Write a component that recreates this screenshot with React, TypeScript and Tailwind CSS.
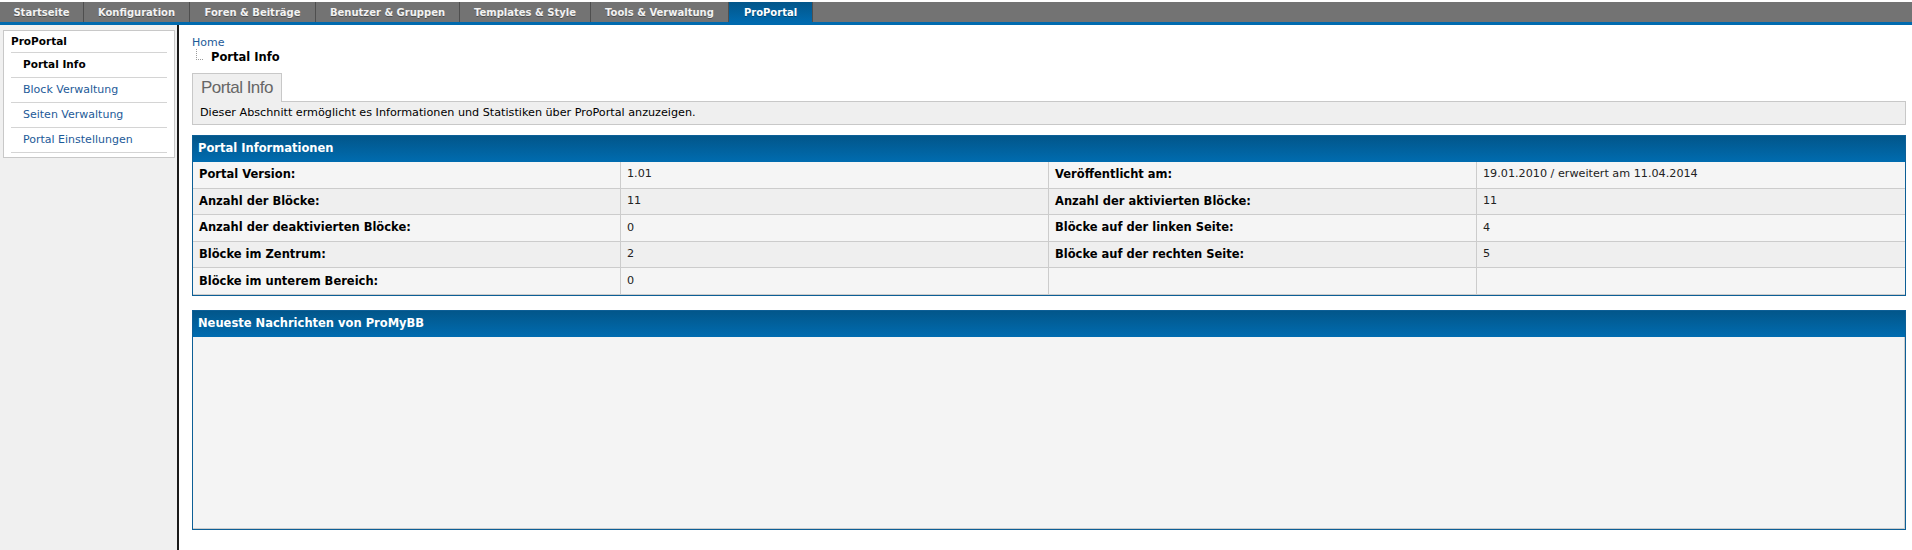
import React from "react";

const tabs = [
  { label: "Startseite", w: "w-[84px]" },
  { label: "Konfiguration", w: "w-[106px]" },
  { label: "Foren & Beiträge", w: "w-[126px]" },
  { label: "Benutzer & Gruppen", w: "w-[144px]" },
  { label: "Templates & Style", w: "w-[131px]" },
  { label: "Tools & Verwaltung", w: "w-[138px]" },
  { label: "ProPortal", w: "w-[84px]", active: true },
];

const sideItems = [
  { label: "Portal Info", active: true },
  { label: "Block Verwaltung" },
  { label: "Seiten Verwaltung" },
  { label: "Portal Einstellungen" },
];

const rows: [string, string, string, string][] = [
  ["Portal Version:", "1.01", "Veröffentlicht am:", "19.01.2010 / erweitert am 11.04.2014"],
  ["Anzahl der Blöcke:", "11", "Anzahl der aktivierten Blöcke:", "11"],
  ["Anzahl der deaktivierten Blöcke:", "0", "Blöcke auf der linken Seite:", "4"],
  ["Blöcke im Zentrum:", "2", "Blöcke auf der rechten Seite:", "5"],
  ["Blöcke im unterem Bereich:", "0", "", ""],
];

const TopNav: React.FC = () => (
  <div className="pt-[2px] bg-white">
    <div className="flex h-[20px] bg-[#737373]">
      {tabs.map((t) => (
        <div
          key={t.label}
          className={`${t.w} flex items-center justify-center border-r border-[#4f4f4f] text-[10px] font-bold ${
            t.active ? "bg-gradient-to-b from-[#02568a] to-[#006aae] text-white" : "text-[#f2f2f2]"
          } [text-shadow:0_1px_0_rgba(0,0,0,0.35)]`}
        >
          {t.label}
        </div>
      ))}
    </div>
    <div className="h-[3px] bg-[#006aae]" />
  </div>
);

const Sidebar: React.FC = () => (
  <div className="w-[179px] shrink-0 bg-[#f0f0f0] border-r-2 border-[#1a1a1a] pt-[5px] pl-[3px] pr-[2px]">
    <div className="bg-white border border-[#c8c8c8] px-[7px] pb-[4px]">
      <div className="h-[22px] flex items-center border-b border-[#d4d4d4] text-[10.5px] font-bold text-black">
        ProPortal
      </div>
      {sideItems.map((i) => (
        <div
          key={i.label}
          className={`h-[25px] flex items-center pl-[12px] border-b border-[#d4d4d4] ${
            i.active ? "text-[10.5px] font-bold text-black" : "text-[11px] text-[#1d5a98]"
          }`}
        >
          {i.label}
        </div>
      ))}
    </div>
  </div>
);

const BoxHeader: React.FC<{ title: string }> = ({ title }) => (
  <div className="h-[26px] flex items-center pl-[5px] bg-gradient-to-b from-[#02568a] to-[#006cb0] text-white text-[11.5px] font-bold">
    {title}
  </div>
);

const InfoTable: React.FC = () => (
  <div className="border border-[#0d5f96] mt-[10px]">
    <BoxHeader title="Portal Informationen" />
    <div className="grid grid-cols-4">
      {rows.map((r, ri) =>
        r.map((c, ci) => (
          <div
            key={`${ri}-${ci}`}
            className={`h-[26.6px] flex items-center px-[6px] border-b border-[#cccccc] ${
              ci < 3 ? "border-r" : ""
            } ${ri % 2 === 0 ? "bg-[#f5f5f5]" : "bg-[#efefef]"} ${
              ci % 2 === 0 ? "text-[11.5px] font-bold text-black" : "text-[11.2px] text-[#222]"
            }`}
          >
            {c}
          </div>
        ))
      )}
    </div>
  </div>
);

const App: React.FC = () => {
  return (
    <div className="min-h-screen flex flex-col bg-white font-['DejaVu_Sans',Verdana,sans-serif]">
      <TopNav />
      <div className="flex flex-1">
        <Sidebar />
        <div className="flex-1 pl-[13px] pr-[6px] pt-[11px]">
          <div className="text-[11px] text-[#1d5a98] leading-[13px]">Home</div>
          <div className="flex items-end h-[14px] mt-[1px]">
            <svg width="12" height="12" viewBox="0 0 12 12" className="ml-[4px] mr-[3px] mb-[3px]">
              <g fill="#9a9a9a">
                <rect x="0" y="0" width="1" height="1" />
                <rect x="0" y="2" width="1" height="1" />
                <rect x="0" y="4" width="1" height="1" />
                <rect x="0" y="6" width="1" height="1" />
                <rect x="0" y="8" width="1" height="1" />
                <rect x="0" y="10" width="1" height="1" />
                <rect x="2" y="10" width="1" height="1" />
                <rect x="4" y="10" width="1" height="1" />
                <rect x="6" y="10" width="1" height="1" />
              </g>
            </svg>
            <span className="text-[11.5px] font-bold text-black leading-[14px]">Portal Info</span>
          </div>
          <div className="mt-[9px] flex">
            <div className="h-[29px] w-[90px] -mb-px bg-[#efefef] border border-b-0 border-[#c8c8c8] flex items-center justify-center text-[17px] text-[#666666] tracking-[-0.5px] font-['Liberation_Sans',Arial,sans-serif]">
              Portal Info
            </div>
          </div>
          <div className="h-[24px] bg-[#efefef] border border-[#c8c8c8] flex items-center pl-[7px] text-[11.2px] text-black">
            Dieser Abschnitt ermöglicht es Informationen und Statistiken über ProPortal anzuzeigen.
          </div>
          <InfoTable />
          <div className="border border-[#0d5f96] mt-[14px]">
            <BoxHeader title="Neueste Nachrichten von ProMyBB" />
            <div className="h-[192px] bg-[#f4f4f4] border-r border-b border-[#cccccc]" />
          </div>
        </div>
      </div>
    </div>
  );
};

export default App;
